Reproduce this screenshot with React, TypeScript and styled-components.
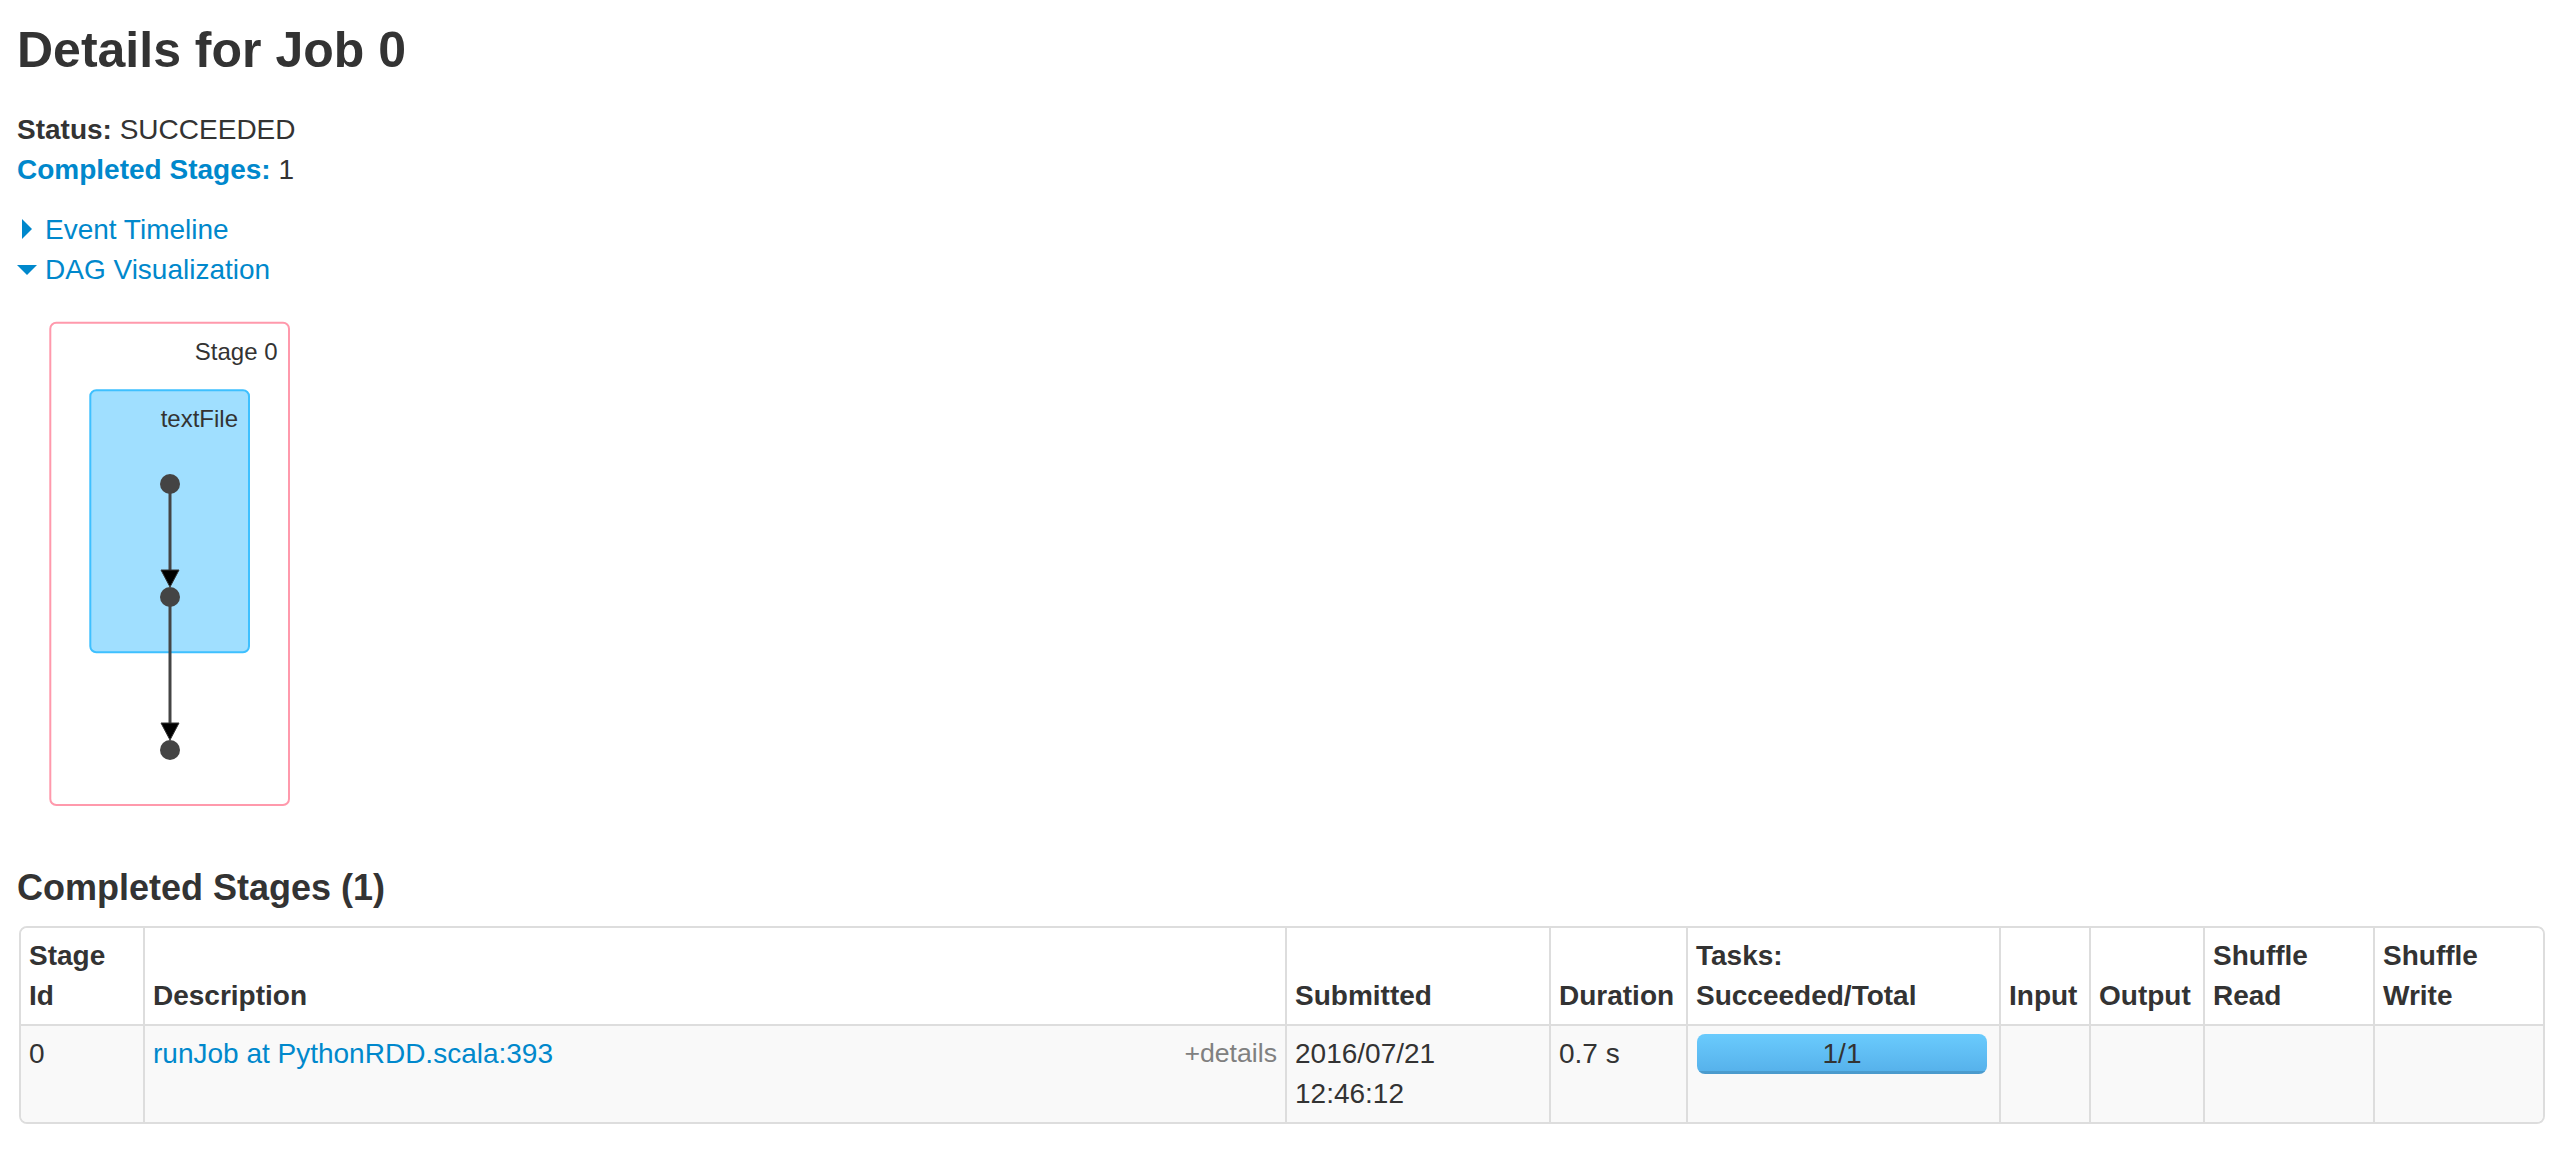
import React from "react";
import styled, { createGlobalStyle } from "styled-components";

const GlobalStyle = createGlobalStyle`
  html, body { margin: 0; padding: 0; background: #ffffff; }
  body {
    font-family: "Liberation Sans", Arial, Helvetica, sans-serif;
    color: #333333;
    font-size: 28px;
    line-height: 40px;
  }
  * { box-sizing: border-box; }
`;

const Page = styled.div`
  padding: 0 25px 40px 17px;
`;

const Title = styled.h3`
  font-size: 50px;
  line-height: 80px;
  font-weight: bold;
  margin: 10px 0 20px;
  color: #333333;
`;

const SummaryList = styled.ul`
  list-style: none;
  margin: 0 0 20px;
  padding: 0;
`;

const SummaryItem = styled.li`
  font-size: 28px;
  line-height: 40px;
`;

const Label = styled.strong`
  font-weight: bold;
`;

const Link = styled.a`
  color: #0088cc;
  text-decoration: none;
  cursor: pointer;
`;

const ToggleRow = styled.div`
  display: flex;
  align-items: center;
  height: 40px;
  font-size: 28px;
`;

const ArrowSlot = styled.span<{ $open: boolean }>`
  width: 20px;
  display: flex;
  justify-content: ${(p) => (p.$open ? "center" : "flex-start")};
  padding-left: ${(p) => (p.$open ? 0 : 5)}px;
  margin-right: 8px;
`;

const Arrow = styled.span<{ $open: boolean }>`
  width: 0;
  height: 0;
  ${(p) =>
    p.$open
      ? `border-left: 10px solid transparent; border-right: 10px solid transparent; border-top: 10px solid #0088cc;`
      : `border-top: 10px solid transparent; border-bottom: 10px solid transparent; border-left: 10px solid #0088cc; margin-top: -2px;`}
`;

const DagCanvas = styled.svg`
  display: block;
`;

const SectionTitle = styled.h4`
  font-size: 36px;
  line-height: 40px;
  font-weight: bold;
  margin: 40px 0 18px;
  color: #333333;
`;

const StageTable = styled.table`
  width: 2526px;
  margin-left: 2px;
  border-collapse: separate;
  border-spacing: 0;
  border: 2px solid #dddddd;
  border-radius: 8px;
  table-layout: fixed;
`;

const HeadCell = styled.th<{ $w: number }>`
  width: ${(p) => p.$w}px;
  padding: 8px;
  font-size: 28px;
  line-height: 40px;
  font-weight: bold;
  text-align: left;
  vertical-align: bottom;
  white-space: nowrap;
  background: #ffffff;
  border-left: 2px solid #dddddd;
  &:first-child { border-left: 0; border-top-left-radius: 6px; }
  &:last-child { border-top-right-radius: 6px; }
`;

const BodyCell = styled.td`
  padding: 8px;
  font-size: 28px;
  line-height: 40px;
  vertical-align: top;
  text-align: left;
  background: #f9f9f9;
  border-left: 2px solid #dddddd;
  border-top: 2px solid #dddddd;
  &:first-child { border-left: 0; border-bottom-left-radius: 6px; }
  &:last-child { border-bottom-right-radius: 6px; }
`;

const DetailsToggle = styled.span`
  float: right;
  font-size: 26.67px;
  line-height: 38px;
  color: #808080;
  cursor: pointer;
`;

const ProgressTrack = styled.div`
  position: relative;
  width: 290px;
  height: 40px;
  margin-left: 1px;
  border-radius: 8px;
  background: #f0f0f0;
  overflow: hidden;
`;

const ProgressFill = styled.div`
  height: 100%;
  background: linear-gradient(#6acbfd, #55b0ea);
  box-shadow: inset 0 -3px 0 rgba(0, 0, 0, 0.12);
`;

const ProgressLabel = styled.span`
  position: absolute;
  left: 0;
  top: 0;
  width: 100%;
  text-align: center;
  font-size: 28px;
  line-height: 40px;
  color: #333333;
`;

function Dag() {
  const cx = 153;
  return (
    <DagCanvas width={320} height={538} viewBox="0 0 320 538">
      <rect x={33.3} y={32.7} width={238.7} height={482.3} rx={6} ry={6} fill="#ffffff" stroke="#FF99AC" strokeWidth={2} />
      <text x={260.5} y={70} textAnchor="end" fontFamily="Liberation Sans, Arial, sans-serif" fontSize={24} fill="#333">
        Stage 0
      </text>
      <rect x={73.3} y={100.3} width={158.7} height={262} rx={6} ry={6} fill="#A0DFFF" stroke="#3EC0FF" strokeWidth={2} />
      <text x={221} y={137.3} textAnchor="end" fontFamily="Liberation Sans, Arial, sans-serif" fontSize={24} fill="#333">
        textFile
      </text>
      <line x1={cx} y1={194} x2={cx} y2={286} stroke="#444" strokeWidth={3} />
      <polygon points={`${cx - 9},280 ${cx + 9},280 ${cx},297`} fill="#000" stroke="#333" strokeWidth={1} />
      <line x1={cx} y1={307} x2={cx} y2={440} stroke="#444" strokeWidth={3} />
      <polygon points={`${cx - 9},433 ${cx + 9},433 ${cx},450`} fill="#000" stroke="#333" strokeWidth={1} />
      <circle cx={cx} cy={194} r={10} fill="#444" />
      <circle cx={cx} cy={307} r={10} fill="#444" />
      <circle cx={cx} cy={460} r={10} fill="#444" />
    </DagCanvas>
  );
}

const columns: { label: React.ReactNode; w: number }[] = [
  { label: <>Stage<br />Id</>, w: 122 },
  { label: "Description", w: 1142 },
  { label: "Submitted", w: 264 },
  { label: "Duration", w: 137 },
  { label: <>Tasks:<br />Succeeded/Total</>, w: 313 },
  { label: "Input", w: 90 },
  { label: "Output", w: 114 },
  { label: <>Shuffle<br />Read</>, w: 170 },
  { label: <>Shuffle<br />Write</>, w: 170 },
];

export default function App() {
  const succeeded = 1;
  const total = 1;
  return (
    <>
      <GlobalStyle />
      <Page>
        <Title>Details for Job 0</Title>
        <SummaryList>
          <SummaryItem>
            <Label>Status:</Label> SUCCEEDED
          </SummaryItem>
          <SummaryItem>
            <Link>
              <Label>Completed Stages:</Label>
            </Link>{" "}
            1
          </SummaryItem>
        </SummaryList>
        <ToggleRow>
          <ArrowSlot $open={false}>
            <Arrow $open={false} />
          </ArrowSlot>
          <Link>Event Timeline</Link>
        </ToggleRow>
        <ToggleRow>
          <ArrowSlot $open={true}>
            <Arrow $open={true} />
          </ArrowSlot>
          <Link>DAG Visualization</Link>
        </ToggleRow>
        <Dag />
        <SectionTitle>Completed Stages (1)</SectionTitle>
        <StageTable>
          <thead>
            <tr>
              {columns.map((c, i) => (
                <HeadCell key={i} $w={c.w}>
                  {c.label}
                </HeadCell>
              ))}
            </tr>
          </thead>
          <tbody>
            <tr>
              <BodyCell>0</BodyCell>
              <BodyCell>
                <DetailsToggle>+details</DetailsToggle>
                <Link>runJob at PythonRDD.scala:393</Link>
              </BodyCell>
              <BodyCell>2016/07/21 12:46:12</BodyCell>
              <BodyCell>0.7 s</BodyCell>
              <BodyCell>
                <ProgressTrack>
                  <ProgressFill style={{ width: `${(succeeded / total) * 100}%` }} />
                  <ProgressLabel>
                    {succeeded}/{total}
                  </ProgressLabel>
                </ProgressTrack>
              </BodyCell>
              <BodyCell></BodyCell>
              <BodyCell></BodyCell>
              <BodyCell></BodyCell>
              <BodyCell></BodyCell>
            </tr>
          </tbody>
        </StageTable>
      </Page>
    </>
  );
}
